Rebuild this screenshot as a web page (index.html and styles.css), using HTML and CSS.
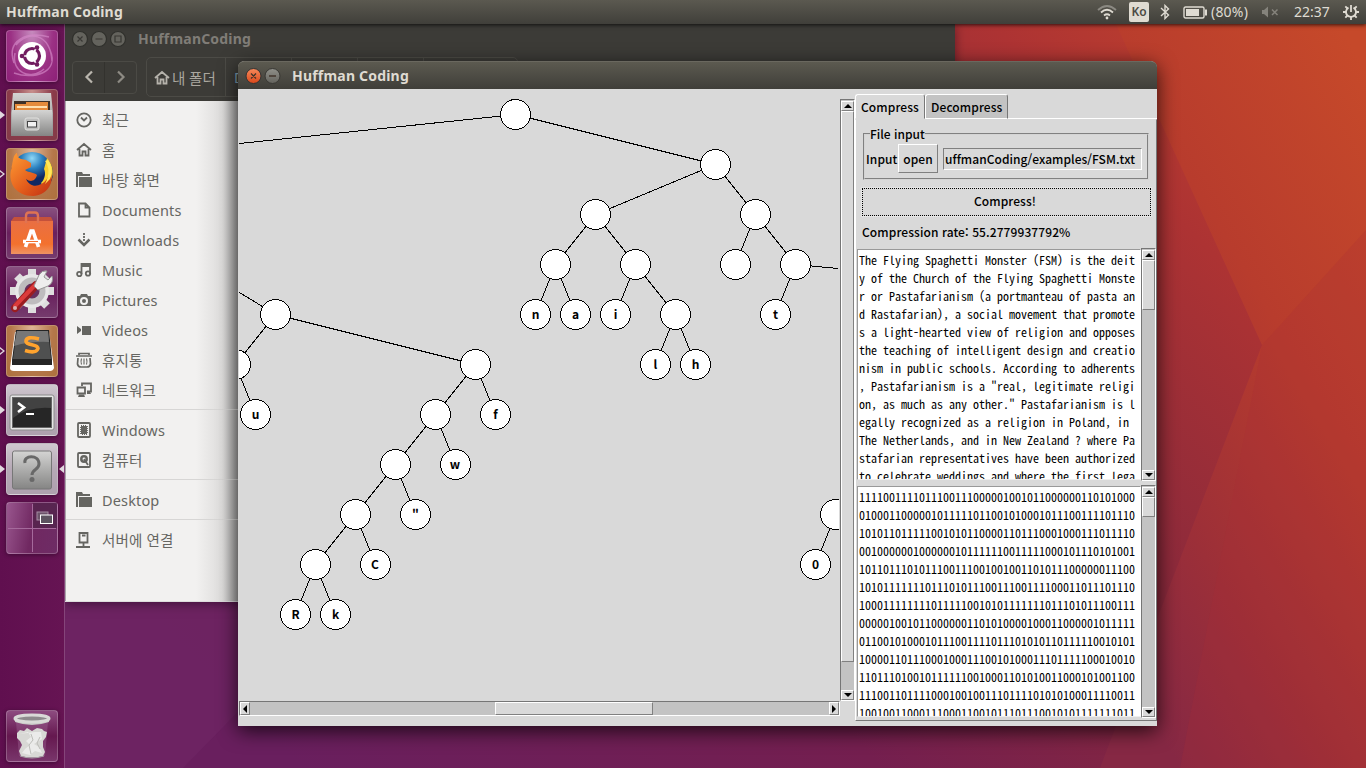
FILE: index.html
```html
<!DOCTYPE html>
<html lang="ko">
<head>
<meta charset="utf-8">
<title>Huffman Coding</title>
<link rel="stylesheet" href="styles.css">
</head>
<body>
<div class="desktop">
<svg class="wallpaper" viewBox="0 0 1366 768" aria-hidden="true">
<defs>
<linearGradient id="wall" gradientUnits="userSpaceOnUse" x1="300" y1="768" x2="1160" y2="-60"><stop offset="0" stop-color="#691f5e"/><stop offset=".35" stop-color="#741f4f"/><stop offset=".62" stop-color="#8a293c"/><stop offset=".85" stop-color="#ad3333"/><stop offset="1" stop-color="#c0422d"/></linearGradient>
<linearGradient id="wallR" x1=".9" y1="0" x2=".3" y2="1"><stop offset="0" stop-color="#c6492a"/><stop offset=".4" stop-color="#b83c2d"/><stop offset=".75" stop-color="#9c2f38"/><stop offset="1" stop-color="#862844"/></linearGradient>
</defs>
<rect width="1366" height="768" fill="url(#wall)"/>
<path d="M1116 24 1262 345 1100 768H1366V24Z" fill="url(#wallR)"/>
<path d="M1262 345 1366 230V768H1180Z" fill="#a92d38" opacity=".22"/>
<path d="M65 602H345L183 768H65Z" fill="#742b6a" opacity=".4"/>
</svg>

<header class="panel">
<span class="panel-title">Huffman Coding</span>
<div class="indicators">
<svg class="wifi" width="20" height="16" viewBox="0 0 20 16" fill="none" stroke-width="1.8"><path d="M1 6Q10-2 19 6" stroke="#8b8982"/><path d="M4 8.500Q10 3 16 8.500M7 11.500Q10 9 13 11.500" stroke="#dfdbd2"/><circle cx="10" cy="14" r="1.400" fill="#dfdbd2"/></svg>
<span class="ko">Ko</span>
<svg class="bt" width="10" height="16" viewBox="0 0 10 16" fill="none" stroke="#dfdbd2" stroke-width="1.400"><path d="M1 4 8.500 11 5 14.500V1.500L8.500 5 1 12"/></svg>
<svg class="battery" width="25" height="13" viewBox="0 0 25 13"><rect x="1" y="1" width="20" height="11" rx="1.500" fill="none" stroke="#dfdbd2" stroke-width="1.400"/><path d="M3 3H16V10H3ZM22 3.500H24V9.500H22Z" fill="#dfdbd2"/></svg>
<span class="pct">(80%)</span>
<svg class="mute" width="18" height="12" viewBox="0 0 18 12"><path d="M1 4H3L7 .500V11.500L3 8H1Z" fill="#85837c"/><path d="M11 3.500 16.500 9M16.500 3.500 11 9" stroke="#85837c" stroke-width="1.500"/></svg>
<span class="clock">22:37</span>
<svg class="gear" width="16" height="16" viewBox="0 0 16 16" fill="none" stroke="#dfdbd2"><path d="M5.500 3.600A5 5 0 1 0 10.500 3.600" stroke-width="1.800"/><path d="M8 1V8" stroke-width="1.800"/><path d="M0 8H3M13 8H16M2.300 2.300 4.500 4.500M13.700 2.300 11.500 4.500M2.300 13.700 4.500 11.500M13.700 13.700 11.500 11.500M8 13V16" stroke-width="1.800"/></svg>
</div>
</header>

<nav class="launcher">
<div class="tile plum"><svg viewBox="0 0 52 52"><g fill="none" stroke="#d58bc9" stroke-width="1.500" opacity=".65"><path d="M8 33C0 10 21 1 43 7M10 15C22 0 44 3 46 31M44 20C54 43 27 50 8 43M38 39C24 51 5 42 9 23"/></g><circle cx="26" cy="26" r="14" fill="#fff"/><circle cx="26" cy="26" r="7.500" fill="none" stroke="#711c5f" stroke-width="3.200"/><g stroke="#fff" stroke-width="1.500"><path d="M15 26H22M31 17 28 22M31 35 28 30"/></g><circle cx="16" cy="26" r="2.300" fill="#711c5f"/><circle cx="31" cy="17.500" r="2.300" fill="#711c5f"/><circle cx="31" cy="34.500" r="2.300" fill="#711c5f"/></svg></div>
<div class="tile brick run"><svg viewBox="0 0 52 52"><defs><linearGradient id="metal" x1="0" y1="0" x2="0" y2="1"><stop stop-color="#d4d4d3"/><stop offset="1" stop-color="#858584"/></linearGradient></defs><path d="M7 4H45L47 24V45H5V24Z" fill="url(#metal)"/><path d="M8 12H44V23H8Z" fill="#3d3028"/><path d="M9 15H20V13H42V23H9Z" fill="#e58b3c"/><path d="M11 17H41V19H11Z" fill="#ffe0b0"/><path d="M6 21H46L47 47H5Z" fill="url(#metal)"/><rect x="19" y="29" width="14" height="12" rx="2" fill="#bdbdbc" stroke="#e1e1df"/><rect x="21.500" y="32.500" width="9" height="5.500" fill="#f2f2f2" stroke="#444"/></svg></div>
<div class="tile amber hollow"><svg viewBox="0 0 52 52"><defs><radialGradient id="globe" cx=".5" cy=".15"><stop stop-color="#8fd8f7"/><stop offset=".5" stop-color="#297fbe"/><stop offset="1" stop-color="#102863"/></radialGradient><linearGradient id="fox" x1="0" y1="0" x2="1" y2="1"><stop stop-color="#ff9d35"/><stop offset=".55" stop-color="#e45e1c"/><stop offset="1" stop-color="#bf2e12"/></linearGradient></defs><circle cx="26" cy="25" r="21" fill="url(#globe)"/><path d="M41 10C50 20 48 34 38 39L35 35C39 31 40 25 38 21Z" fill="#f9d12e"/><path d="M7 12C8 7 10 5 11 5 11 10 14 11 20 12L25 15 25 19 19 22C23 25 28 24 31 27 29 34 24 34 20 31 24 40 34 40 41 31 44 26 43 22 42 18 52 34 40 48 27 48 10 48 2 35 5 22Z" fill="url(#fox)"/><path d="M42 12C46 18 47 24 44 31L39 36C44 27 43 18 39 13Z" fill="#ffe75a"/></svg></div>
<div class="tile glass"><svg viewBox="0 0 52 52"><defs><linearGradient id="bag" x1="0" y1="0" x2="0" y2="1"><stop stop-color="#e96f43"/><stop offset=".7" stop-color="#f3712e"/><stop offset="1" stop-color="#ef9363"/></linearGradient></defs><path d="M5 14 8 10H45L47 14Z" fill="#c4513b"/><path d="M5 14H47V47H5Z" fill="url(#bag)"/><path d="M20 16V9Q20 5.500 23 5.500H29Q32 5.500 32 9V16" fill="none" stroke="#df7352" stroke-width="2.400"/><path d="M19.500 40 25 24H27L32.500 40" fill="none" stroke="#fff" stroke-width="3.600"/><path d="M17 34.500H35" stroke="#fff" stroke-width="3.600"/><path d="M20 34.500H32" stroke="#f3712e" stroke-width="1"/></svg></div>
<div class="tile glass"><svg viewBox="0 0 52 52"><g stroke="#dedede" stroke-width="8"><path d="M26 3V47M4 25H48M11 10 41 40M41 10 11 40"/></g><circle cx="26" cy="25" r="17" fill="#e7e7e7"/><circle cx="26" cy="25" r="10.500" fill="#67305e" stroke="#bebcbe" stroke-width="6"/><path d="M9 42 30 19" stroke="#9a1c20" stroke-width="8" stroke-linecap="round"/><path d="M9 40 30 18" stroke="#db3b3b" stroke-width="4" stroke-linecap="round"/><path d="M28 20 33 9Q36 4 41 5L38 11 42 14 46 10Q48 17 42 20L32 24Z" fill="#eee" stroke="#989898"/><circle cx="9" cy="42" r="2" fill="#d8b0b0"/></svg></div>
<div class="tile amber hollow"><svg viewBox="0 0 52 52"><path d="M9 7H43L48 43Q47 46 44 46H8Q4 46 4 43Z" fill="#fff"/><path d="M10 5H43L46 35V40H6V35Z" fill="#252525"/><path d="M11 6H42L45 34H7Z" fill="#4f5050"/><path d="M11 6H42L43 17Q25 16 8 21Z" fill="#777"/><path d="M33 14Q20 10.500 20 16.500C20.500 21 32 18.500 32 23.500Q30 29 19 25.500" fill="none" stroke="#ffa32e" stroke-width="3.600"/></svg></div>
<div class="tile silver run"><svg viewBox="0 0 52 52"><rect x="4" y="11" width="44" height="35" rx="2" fill="#e5e5e5" stroke="#8b8b8b"/><rect x="6.500" y="13.500" width="39" height="30" fill="#262626" stroke="#666"/><path d="M7 14H45V24Q23 22 7 34Z" fill="#555" opacity=".6"/><path d="M12 19 18 23.500 12 28" fill="none" stroke="#fff" stroke-width="2.600"/><path d="M20 30H28" stroke="#fff" stroke-width="2"/></svg></div>
<div class="tile silver run focus"><svg viewBox="0 0 52 52"><rect x="6.500" y="8" width="39" height="38" rx="2" fill="url(#metal)" stroke="#777"/><path d="M19 20C17 12 33 11 33 21 33 27 26 26 26 32" fill="none" stroke="#686868" stroke-width="3"/><circle cx="26" cy="36.500" r="2.500" fill="#686868"/></svg></div>
<div class="tile space"><svg viewBox="0 0 52 52"><path d="M27 1H51V26H27Z" fill="#452142" opacity=".55"/><path d="M26.500 2V50M2 26.500H50" stroke="#a56a9c"/><rect x="31" y="10" width="11" height="8" fill="#6b5369" stroke="#a68ba4"/><rect x="34.500" y="13" width="12" height="8.500" fill="#5d5360" stroke="#fff"/></svg></div>
<div class="tile trash plum-dim"><svg viewBox="0 0 52 52"><path d="M10 12H42L39 46H13Z" fill="#a7719f" opacity=".35"/><path d="M11 23 14 20 18 21 21 18 26 21 31 18 36 19 38 21 41 22 40 27 37 31 37 37 39 42 37 46Q26 49 15 46L13 41 16 35 14 31 11 28Z" fill="#d8d8d5"/><path d="M13 24 22 22 25 27 20 31 24 35 19 39 16 43 24 45 29 41 36 43 33 37 28 34 36 29 35 22 29 22Z" fill="#efefed" opacity=".85"/><path d="M25 24 27 30 23 35 25 44M34 27 31 33 34 39" stroke="#bdbdb9" fill="none"/><path d="M14 46Q26 50 38 46" fill="none" stroke="#a9a3a8"/><path d="M9 9V12Q26 18 43 12V9Q26 15 9 9Z" fill="#c6c7c4"/><ellipse cx="26" cy="8.500" rx="17" ry="3.500" fill="#8d8a8c" stroke="#d9dad7" stroke-width="3"/></svg></div>
</nav>

<section class="files">
<div class="files-head">
<div class="files-title"><svg width="56" height="18" viewBox="0 0 56 18" fill="none" stroke="#383733" stroke-width="1.200"><g fill="#64635d" stroke="#30302c"><circle cx="9" cy="9" r="7.500"/><circle cx="28" cy="9" r="7.500"/><circle cx="47" cy="9" r="7.500"/></g><path d="M6.500 6.500 11.500 11.500M11.500 6.500 6.500 11.500M24.500 9H31.500M44 6H50V12H44Z"/></svg><span>HuffmanCoding</span></div>
<div class="files-tools">
<div class="arrows"><span><svg width="10" height="14" viewBox="0 0 10 14"><path d="M8 1.500 2.500 7 8 12.500" fill="none" stroke="#bab6ae" stroke-width="2.200"/></svg></span><span><svg width="10" height="14" viewBox="0 0 10 14"><path d="M2 1.500 7.500 7 2 12.500" fill="none" stroke="#8e8b84" stroke-width="2.200"/></svg></span></div>
<div class="crumbs"><span class="crumb home"><svg width="16" height="15" viewBox="0 0 16 15" fill="none" stroke="#b5b2ab" stroke-width="1.800"><path d="M1 8 8 2 15 8M3.500 7V13.500H6.500V9.500H9.500V13.500H12.500V7"/></svg>내 폴더</span><span class="crumb current">D</span><span class="crumb"></span><span class="crumb"></span></div>
</div>
</div>
<div class="places">
<div class="place"><svg viewBox="0 0 16 16"><circle cx="8" cy="8" r="6.700"/><path d="M5 5.500 8 8.500 11 5.500"/></svg>최근</div>
<div class="place"><svg viewBox="0 0 16 16"><path d="M1 8 8 2 15 8M3.500 7V13.500H6.500V9.500H9.500V13.500H12.500V7"/></svg>홈</div>
<div class="place"><svg class="solid" viewBox="0 0 16 16"><path d="M0 0H6L7 2H14V4H2V15H0ZM3 5H16V15H3Z"/></svg>바탕 화면</div>
<div class="place"><svg viewBox="0 0 16 16"><path d="M3 1.500H9.500L13.500 5.500V14.500H3ZM9.500 1.500V5.500H13.500"/></svg>Documents</div>
<div class="place"><svg viewBox="0 0 16 16"><path d="M8 1V9" stroke-dasharray="2 1"/><path d="M2.500 7.500 8 13 13.500 7.500" stroke-width="2.500"/></svg>Downloads</div>
<div class="place"><svg viewBox="0 0 16 16"><circle cx="3.300" cy="12" r="2.200"/><circle cx="12" cy="11.500" r="2.200"/><path d="M5.500 12V2H14V12M5.500 4H14"/></svg>Music</div>
<div class="place"><svg class="solid" viewBox="0 0 16 16"><path fill-rule="evenodd" d="M1 4H4L5 2H11L12 4H15V14H1ZM8 5A4 4 0 1 0 8 13A4 4 0 1 0 8 5ZM8 7A2 2 0 1 1 8 11A2 2 0 1 1 8 7Z"/></svg>Pictures</div>
<div class="place"><svg class="solid" viewBox="0 0 16 16"><path d="M1 4 5 7V9L1 12ZM6 4H15V13H6Z"/></svg>Videos</div>
<div class="place"><svg viewBox="0 0 16 16"><path d="M3 3V1.500H13V3M0 4H16" stroke-width="1.700"/><path d="M2 6 1.500 12Q2 15 5 15H11Q14 15 14.500 12L14 6" stroke-width="1.700"/><path d="M5.500 6.500Q4.500 9.500 5.500 12.500M10.500 6.500Q11.500 9.500 10.500 12.500M8 6.500V12.500" stroke-width="1.100"/></svg>휴지통</div>
<div class="place"><svg viewBox="0 0 16 16"><path d="M6 4V1.500H15V9.500H11M1.500 5.500H9V11.500H1.500Z"/><path d="M3 12.500H8L9 15H2ZM11 10H14L15 12H11Z" fill="#656561" stroke="none"/></svg>네트워크</div>
<hr>
<div class="place"><svg viewBox="0 0 16 16"><rect x="2" y="1" width="12" height="14" rx="1"/><rect x="5" y="4" width="6" height="8" fill="#656561" stroke-dasharray="1 1"/></svg>Windows</div>
<div class="place"><svg viewBox="0 0 16 16"><rect x="2" y="1" width="12" height="14" rx="1"/><circle cx="8" cy="7" r="2.700" stroke-width="2.500"/><path d="M8 7 12 13"/></svg>컴퓨터</div>
<hr>
<div class="place"><svg class="solid" viewBox="0 0 16 16"><path d="M0 0H6L7 2H14V4H2V15H0ZM3 5H16V15H3Z"/></svg>Desktop</div>
<hr>
<div class="place"><svg viewBox="0 0 16 16"><path d="M3.500 1H11.500V10.500H3.500ZM6 3.500H9.500M7.500 11V15M0 15H14"/></svg>서버에 연결</div>
</div>
</section>

<main class="app">
<div class="app-title"><svg width="38" height="18" viewBox="0 0 38 18"><defs><linearGradient id="close" x1="0" y1="0" x2="0" y2="1"><stop stop-color="#f78a5b"/><stop offset="1" stop-color="#db4719"/></linearGradient><linearGradient id="min" x1="0" y1="0" x2="0" y2="1"><stop stop-color="#90908a"/><stop offset="1" stop-color="#63625c"/></linearGradient></defs><circle cx="9.500" cy="9" r="7.500" fill="url(#close)" stroke="#333"/><circle cx="28.500" cy="9" r="7.500" fill="url(#min)" stroke="#383733"/><path d="M7 6.500 12 11.500M12 6.500 7 11.500M25 9H32" stroke="#42352b" stroke-width="1.300"/></svg><span>Huffman Coding</span></div>
<div class="app-body">
<div class="tree-area">
<svg class="tree" viewBox="239 99 601 602">
<g class="edges"><path d="M515 114 239 143M515 114 715 164 595 214 555 264 535 314M555 264 575 314M595 214 635 264 615 314M635 264 675 314 655 364M675 314 695 364M715 164 755 214 735 264M755 214 795 264 775 314M795 264 838 268M275 314 239 292M275 314 235 364 255 414M275 314 475 364 435 414 395 464 355 514 315 564 295 614M475 364 495 414M435 414 455 464M395 464 415 514M355 514 375 564M315 564 335 614M835 514 815 564"/></g>
<g class="nodes">
<circle cx="515.500" cy="114.500" r="15"/><circle cx="715.500" cy="164.500" r="15"/><circle cx="595.500" cy="214.500" r="15"/><circle cx="755.500" cy="214.500" r="15"/><circle cx="555.500" cy="264.500" r="15"/><circle cx="635.500" cy="264.500" r="15"/><circle cx="735.500" cy="264.500" r="15"/><circle cx="795.500" cy="264.500" r="15"/><circle cx="535.500" cy="314.500" r="15"/><circle cx="575.500" cy="314.500" r="15"/><circle cx="615.500" cy="314.500" r="15"/><circle cx="675.500" cy="314.500" r="15"/><circle cx="775.500" cy="314.500" r="15"/><circle cx="655.500" cy="364.500" r="15"/><circle cx="695.500" cy="364.500" r="15"/><circle cx="275.500" cy="314.500" r="15"/><circle cx="235.500" cy="364.500" r="15"/><circle cx="255.500" cy="414.500" r="15"/><circle cx="475.500" cy="364.500" r="15"/><circle cx="435.500" cy="414.500" r="15"/><circle cx="495.500" cy="414.500" r="15"/><circle cx="395.500" cy="464.500" r="15"/><circle cx="455.500" cy="464.500" r="15"/><circle cx="355.500" cy="514.500" r="15"/><circle cx="415.500" cy="514.500" r="15"/><circle cx="315.500" cy="564.500" r="15"/><circle cx="375.500" cy="564.500" r="15"/><circle cx="295.500" cy="614.500" r="15"/><circle cx="335.500" cy="614.500" r="15"/><circle cx="835.500" cy="514.500" r="15"/><circle cx="815.500" cy="564.500" r="15"/>
</g>
<path d="M839.500 99V701" stroke="#d9d9d9"/>
<g class="letters"><text x="535.500" y="319">n</text><text x="575.500" y="319">a</text><text x="615.500" y="319">i</text><text x="775.500" y="319">t</text><text x="655.500" y="369">l</text><text x="695.500" y="369">h</text><text x="255.500" y="419">u</text><text x="495.500" y="419">f</text><text x="455" y="469">w</text><text x="415.500" y="519">"</text><text x="375" y="569">C</text><text x="295.500" y="619">R</text><text x="335.500" y="619">k</text><text x="815.500" y="569">0</text></g>
</svg>
<div class="vbar main-v"><i class="btn up"></i><i class="thumb"></i><i class="gap"></i><i class="btn down"></i></div>
<div class="hbar"><i class="btn left"></i><i class="gap before"></i><i class="thumb"></i><i class="gap"></i><i class="btn right"></i></div>
</div>
<div class="notebook">
<div class="tabs"><span class="tab active">Compress</span><span class="tab idle">Decompress</span><span class="tab-line"></span></div>
<div class="pane">
<fieldset class="file-input"><legend>File input</legend><span class="input-label">Input</span><button class="open">open</button><div class="entry">uffmanCoding/examples/FSM.txt</div></fieldset>
<button class="compress">Compress!</button>
<div class="rate">Compression rate: 55.2779937792%</div>
<div class="text-row"><pre class="text">The Flying Spaghetti Monster (FSM) is the deit
y of the Church of the Flying Spaghetti Monste
r or Pastafarianism (a portmanteau of pasta an
d Rastafarian), a social movement that promote
s a light-hearted view of religion and opposes
the teaching of intelligent design and creatio
nism in public schools. According to adherents
, Pastafarianism is a "real, legitimate religi
on, as much as any other." Pastafarianism is l
egally recognized as a religion in Poland, in 
The Netherlands, and in New Zealand ? where Pa
stafarian representatives have been authorized
to celebrate weddings and where the first lega</pre>
<div class="vbar"><i class="btn up"></i><i class="thumb"></i><i class="gap"></i><i class="btn down"></i></div></div>
<div class="text-row encoded"><pre class="text">1111001111011100111000001001011000000110101000
0100011000001011111011001010001011100111101110
1010110111110010101100001101110001000111011110
0010000001000000101111110011111000101110101001
1011011101011100111001001001101011100000011100
1010111111101110101110011100111100011011101110
1000111111110111110010101111111011101011100111
0000010010110000001101010000100011000001011111
0110010100010111001111011101010110111110010101
1000011011100010001110010100011101111100010010
1101110100101111110010001101010011000101001100
1110011011110001001001110111101010100011110011
1001001100011100011001011101110010101111111011</pre>
<div class="vbar"><i class="btn up"></i><i class="thumb short"></i><i class="gap"></i><i class="btn down"></i></div></div>
</div>
</div>
</div>
</main>
</div>
</body>
</html>
```
FILE: styles.css
```css
* { box-sizing: border-box; }
body { margin: 0; overflow: hidden; font-family: "Noto Sans", "Noto Sans CJK KR", sans-serif; }
svg { flex: none; display: block; }
.desktop { position: relative; width: 1366px; height: 768px; overflow: hidden; background: #672060; }
.wallpaper { position: absolute; inset: 0; width: 1366px; height: 768px; }

.panel { position: absolute; z-index: 3; top: 0; left: 0; width: 1366px; height: 24px; padding: 0 7px 0 6px; display: flex; align-items: center; justify-content: space-between; background: linear-gradient(#5b5950, #403f3a); color: #dfdbd2; box-shadow: 0 1px 4px rgba(0,0,0,.75); }
.panel-title { font-weight: 700; font-size: 14px; letter-spacing: .2px; white-space: nowrap; padding-bottom: 1px; }
.indicators { display: flex; align-items: center; font-size: 14px; white-space: nowrap; }
.ko { margin-left: 12px; width: 20px; height: 20px; border-radius: 2px; background: #dfdbd2; color: #4b4a44; font-size: 12px; font-weight: 600; line-height: 20px; text-align: center; }
.bt { margin-left: 11px; }
.battery { margin-left: 13px; }
.pct { margin-left: 3px; width: 40px; padding-bottom: 1px; letter-spacing: .2px; }
.mute { margin-left: 10px; }
.clock { margin-left: 15px; width: 38px; padding-bottom: 1px; }
.gear { margin-left: 11px; }

.launcher { position: absolute; z-index: 2; left: 0; top: 24px; width: 65px; height: 744px; padding: 6px 0 6px 6px; display: flex; flex-direction: column; gap: 7px; background: linear-gradient(90deg, #600f4f, #661453); border-right: 1px solid #85457a; }
.tile { position: relative; width: 52px; height: 52px; border-radius: 4px; border: 1px solid rgba(255,255,255,.22); box-shadow: 0 1px 4px rgba(20,0,20,.45); }
.tile svg { width: 52px; height: 52px; margin: -1px; }
.plum { background: radial-gradient(ellipse at top, #c68bbe, #9b3184 60%, #8d2078); }
.brick { background: radial-gradient(ellipse at top, #c8908d, #8b3b4a 60%, #833b48); }
.amber { background: radial-gradient(ellipse at top, #dfb596, #b5774a 60%, #ad713e); }
.glass { background: linear-gradient(#88507f, #69205d 50%, #753b6d); }
.silver { background: linear-gradient(#cfc7cf, #b6a9b6 50%, #aea0ae); }
.space { background: linear-gradient(100deg, #99568e, #702861 50%, #6e2c65); }
.plum-dim { background: linear-gradient(#8d4b80, #65184f 50%, #79366b); }
.trash { margin-top: auto; }
.run::before, .hollow::before { content: ""; position: absolute; left: -7px; top: 21px; border: 4px solid transparent; border-left: 5px solid #e1d9df; border-right: 0; }
.hollow::after { content: ""; position: absolute; left: -8px; top: 22px; border: 3px solid transparent; border-left: 4px solid #5b104b; border-right: 0; }
.focus::after { content: ""; position: absolute; right: -7px; top: 21px; border: 4px solid transparent; border-right: 5px solid #e1d9df; border-left: 0; }

.files { position: absolute; left: 65px; top: 24px; width: 890px; height: 578px; background: #f2f1f0; box-shadow: 0 2px 10px rgba(20,0,20,.5); border-bottom: 1px solid #ddd; }
.files-head { height: 77px; background: #3c3b37; }
.files-title { height: 29px; padding-left: 6px; display: flex; align-items: center; gap: 11px; color: #807d77; font-size: 14px; font-weight: 700; letter-spacing: .2px; }
.files-tools { display: flex; align-items: center; height: 46px; padding: 2px 0 0 7px; gap: 9px; color: #aaa79f; font-size: 14px; }
.arrows { display: flex; width: 65px; height: 33px; border: 1px solid #4b4a45; border-radius: 4px; }
.arrows span { flex: 1; display: flex; align-items: center; justify-content: center; }
.arrows span + span { border-left: 1px solid #33322e; }
.crumbs { display: flex; height: 40px; width: 372px; border: 1px solid #4c4b46; border-radius: 5px; }
.crumb { width: 66px; border-right: 1px solid #4c4b46; display: flex; align-items: center; padding-left: 8px; }
.home { width: 79px; padding-left: 7px; gap: 2px; white-space: nowrap; font-size: 14.5px; }
.current { color: #7fa0b4; }
.places { width: 173px; height: 500px; padding-top: 4px; border-left: 1px solid #aaa6aa; color: #666662; font-size: 14.5px; background: linear-gradient(90deg, #f2f1f0 0 130px, #dddcdb 157px, #a4a3a3 173px); }
.place { height: 30px; padding: 0 0 1px 10px; display: flex; align-items: center; gap: 10px; letter-spacing: .15px; white-space: nowrap; }
.place svg { width: 16px; height: 16px; fill: none; stroke: #656561; stroke-width: 1.8; }
.place svg.solid { fill: #656561; stroke: none; }
.places hr { border: 0; margin: 4px 0 3px; height: 3px; border-top: 1px solid #d7d6d5; }

.app { position: absolute; left: 238px; top: 61px; width: 919px; height: 665px; background: #d9d9d9; border-radius: 7px 7px 0 0; box-shadow: 0 5px 20px rgba(0,0,0,.75); }
.app-title { height: 28px; padding-left: 6px; display: flex; align-items: center; gap: 10px; color: #dfdbd2; font-weight: 700; font-size: 14px; letter-spacing: .2px; border-radius: 6px 6px 0 0; background: linear-gradient(#5c5a50, #3f3e39); border-top: 1px solid #6a685f; }
.app-body { display: flex; height: 637px; font-family: "Noto Sans CJK KR", sans-serif; font-size: 12px; letter-spacing: .1px; font-weight: 500; color: #000; }
.tree-area { width: 617px; padding: 10px 1px; display: grid; grid-template-columns: 601px 15px; grid-template-rows: 602px 15px; }
.tree { width: 601px; height: 602px; overflow: hidden; }
.edges { fill: none; stroke: #000; shape-rendering: crispEdges; transform: translate(.5px,.5px); }
.nodes { fill: #fff; stroke: #000; shape-rendering: crispEdges; }
.letters { text-anchor: middle; font-size: 12px; letter-spacing: 0; font-weight: 700; }
.vbar { width: 15px; display: flex; flex-direction: column; padding: 1px 0 0; background: #c3c3c3; border: 1px solid; border-color: #767676 #fff #fff #767676; }
.hbar { height: 15px; display: flex; background: #c3c3c3; border: 1px solid; border-color: #767676 #fff #fff #767676; }
.btn, .thumb { display: flex; align-items: center; justify-content: center; background: #d9d9d9; border: 1px solid; border-color: #fff #808080 #808080 #fff; }
.gap { flex: 1; }
.main-v { height: 602px; }
.vbar .btn { height: 10px; }
.btn::before { content: ""; border: 4px solid transparent; }
.up::before { border-top: 0; border-bottom-color: #000; }
.down::before { border-bottom: 0; border-top-color: #000; }
.left::before { border-left: 0; border-right-color: #000; }
.right::before { border-right: 0; border-left-color: #000; }
.hbar .btn { width: 10px; }
.hbar .before { flex: 0 0 245px; }
.hbar .thumb { width: 158px; }
.vbar .thumb { height: 50px; }
.vbar .short { height: 20px; }
.main-v .thumb { height: 551px; }

.notebook { width: 302px; padding-top: 5px; }
.tabs { display: flex; height: 25px; }
.tab { height: 25px; line-height: 23px; white-space: nowrap; border: 1px solid; border-radius: 3px 3px 0 0; }
.active { width: 70px; padding-left: 5px; border-color: #fff #777 transparent #fff; }
.idle { width: 83px; padding-left: 5px; border-color: #fff #777 #fff #fff; background: #c3c3c3; }
.tab-line { flex: 1; border-bottom: 1px solid #fff; }
.pane { height: 602px; border: 1px solid; border-color: transparent #777 #777 #fff; padding: 4px 0 0 1px; display: flex; flex-direction: column; }
button { font: inherit; letter-spacing: .1px; color: #000; background: #d9d9d9; padding: 0; display: block; flex: none; }
.file-input { margin: 0 7px 0 6px; height: 56px; padding: 0 5px 2px 1px; border: 2px groove #d4d4d4; min-width: 0; display: flex; align-items: center; }
.file-input legend { margin-left: 4px; padding: 0; height: 20px; line-height: 19px; letter-spacing: 0; }
.input-label { width: 30px; white-space: nowrap; }
.open { margin-left: 2px; width: 40px; height: 29px; border: 1px solid; border-color: #fff #808080 #808080 #fff; }
.entry { margin-left: 5px; width: 199px; height: 22px; padding-left: 1px; line-height: 20px; letter-spacing: .04px; border: 1px solid; border-color: #808080 #fff #fff #808080; white-space: nowrap; overflow: hidden; }
.compress { width: 289px; height: 28px; margin: 8px 0 0 5px; padding: 0 3px 3px 0; border: 1px dotted #000; box-shadow: 0 0 0 1px #e5e5e5; }
.rate { height: 32px; line-height: 32px; padding-left: 5px; white-space: nowrap; }
.text-row { display: flex; justify-content: space-between; height: 233px; }
.encoded { margin-top: 4px; }
.text { margin: 1px 0 0; width: 284px; height: 231px; padding: 1px 1px 0; overflow: hidden; background: #fff; border: 1px solid; border-color: #999 #fff #eee #999; font-family: "Noto Sans Mono CJK KR", "Noto Sans Mono CJK SC", "Liberation Mono", monospace; font-size: 12px; letter-spacing: 0; font-weight: 400; line-height: 18px; }
```
